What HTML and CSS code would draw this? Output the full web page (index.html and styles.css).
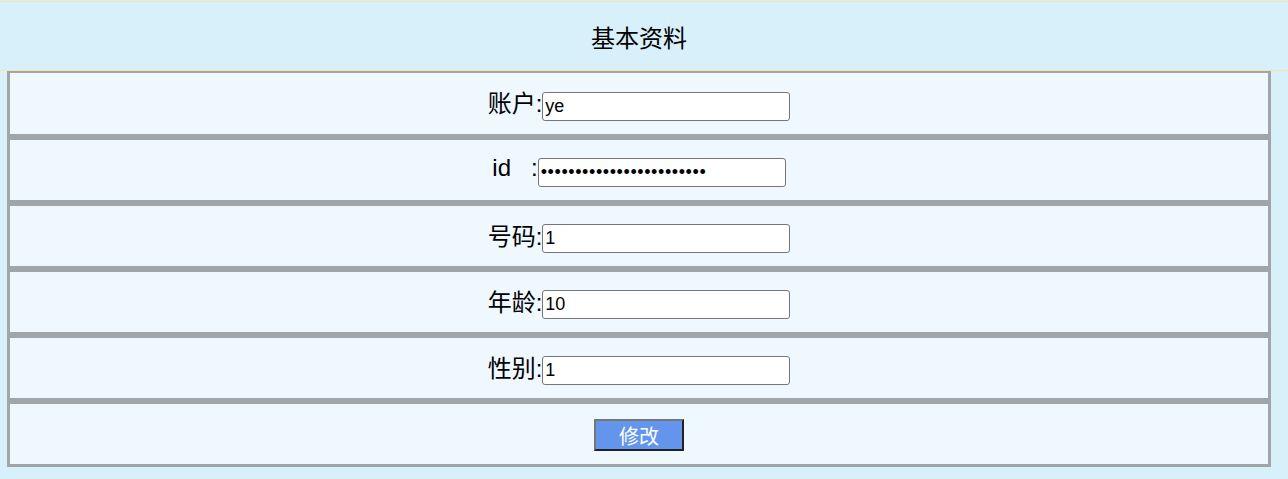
FILE: index.html
```html
<!DOCTYPE html>
<html lang="zh">
<head>
<meta charset="utf-8">
<title>基本资料</title>
<link rel="stylesheet" href="styles.css">
</head>
<body>
<div class="header">基本资料</div>
<div class="form">
  <div class="row first"><label>账户:</label><input class="field" type="text" value="ye"></div>
  <div class="row"><label>id&nbsp;&nbsp;&nbsp;:</label><input class="field secret" type="password" value="abcdefghijklmnopqrstuvwx"></div>
  <div class="row"><label>号码:</label><input class="field" type="text" value="1"></div>
  <div class="row"><label>年龄:</label><input class="field" type="text" value="10"></div>
  <div class="row"><label>性别:</label><input class="field" type="text" value="1"></div>
  <div class="row"><button class="btn" type="button">修改</button></div>
</div>
</body>
</html>
```
FILE: styles.css
```css
html, body {
  margin: 0;
  padding: 0;
  background: #d8f0fa;
  font-family: "Liberation Sans", "Noto Sans CJK SC", sans-serif;
  color: #000;
}
.header {
  margin-top: 1px;
  height: 68px;
  padding-right: 10px;
  border-top: 1px solid #fbe0b0;
  border-bottom: 1px solid #fbe0b0;
  display: flex;
  align-items: center;
  justify-content: center;
  font-size: 24px;
  background: #d8f0fa;
}
.form {
  margin-left: 7px;
  width: 1258px;
  border: 3px solid #a0a5a9;
  border-top: 2px solid #a0a5a9;
  background: #a0a5a9;
  display: flex;
  flex-direction: column;
  gap: 6px;
}
.row {
  height: 60px;
  background: #eff7ff;
  display: flex;
  align-items: center;
  justify-content: center;
}
.row.first {
  height: 61px;
}
label {
  font-size: 24px;
  position: relative;
  top: -2px;
}
.field {
  box-sizing: border-box;
  width: 248px;
  height: 29px;
  margin: 5px 0 0 0;
  padding: 0 2px;
  border: 1px solid #767676;
  border-radius: 3px;
  background: #fff;
  font-family: "Liberation Sans", "Noto Sans CJK SC", sans-serif;
  font-size: 18px;
  color: #000;
}
.field.secret {
  letter-spacing: 0.6px;
}
.btn {
  box-sizing: border-box;
  width: 90px;
  height: 32px;
  margin-top: 2px;
  background: #6495ed;
  color: #fff;
  font-family: "Liberation Sans", "Noto Sans CJK SC", sans-serif;
  font-size: 20px;
  border: 2px solid;
  border-color: #767676 #222 #222 #767676;
  padding: 0;
}
```
